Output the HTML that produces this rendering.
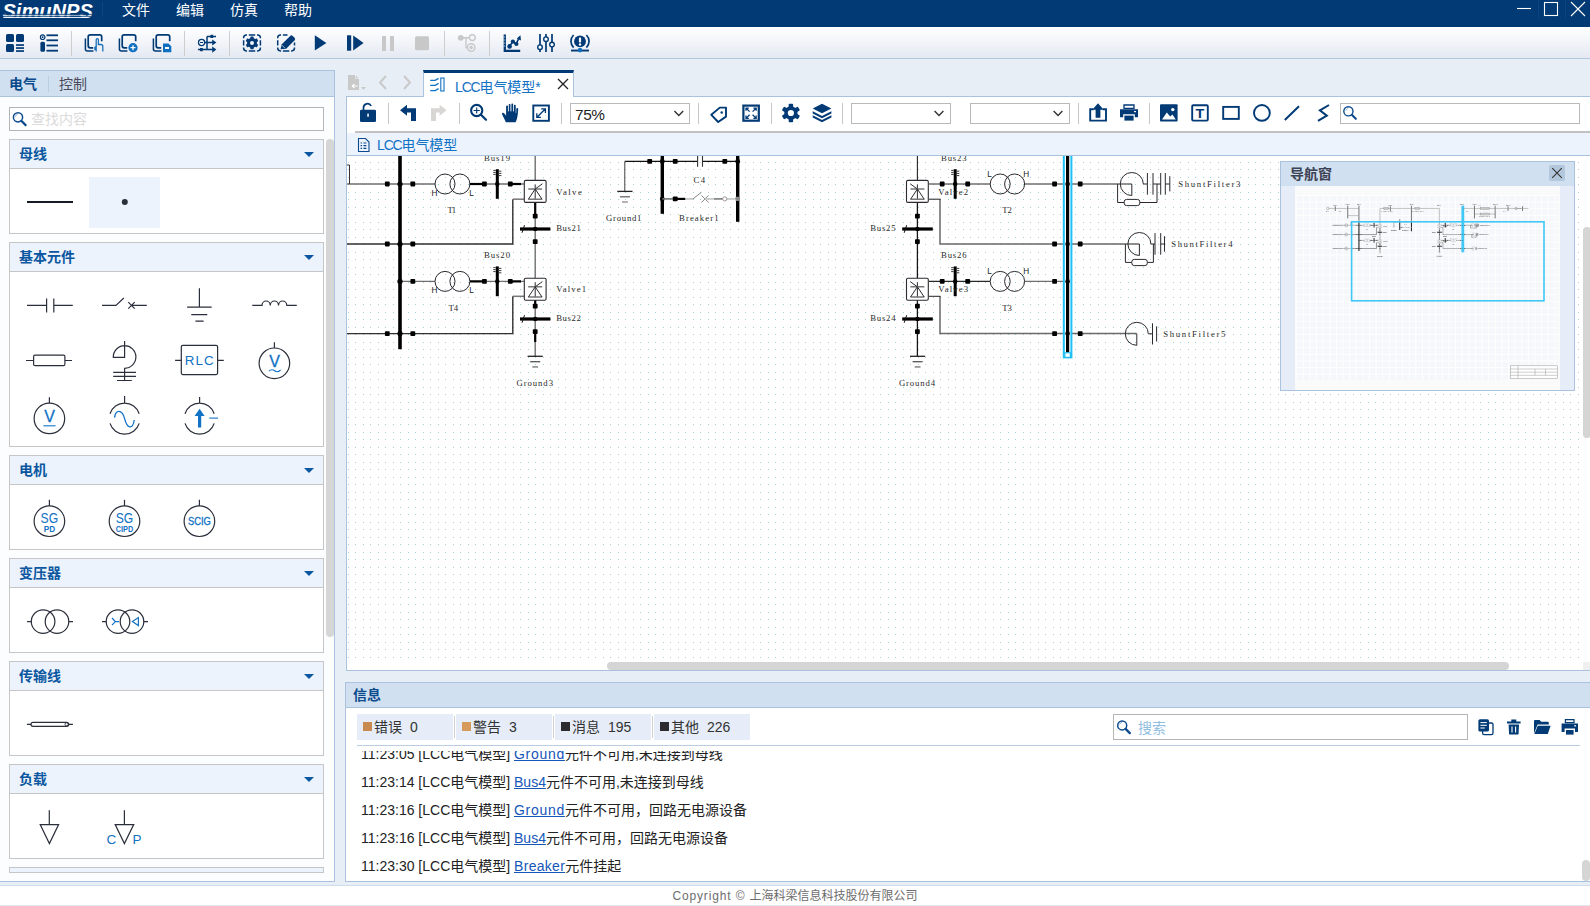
<!DOCTYPE html>
<html lang="zh-CN">
<head>
<meta charset="utf-8">
<title>SimuNPS</title>
<style>
*{box-sizing:border-box;margin:0;padding:0}
html,body{width:1590px;height:906px;overflow:hidden;background:#e8eef6;font-family:"Liberation Sans","Noto Sans CJK SC",sans-serif;font-size:14px;color:#222}
.abs{position:absolute}
#titlebar{position:absolute;left:0;top:0;width:1590px;height:27px;background:#013a75}
#titlebar .menu{position:absolute;top:0;height:24px;line-height:21px;color:#fff;font-size:14px}
#toolbar{position:absolute;left:0;top:27px;width:1590px;height:32px;background:linear-gradient(#ffffff 0%,#f3f5f9 45%,#e4e9f2 100%);border-bottom:1px solid #b4c8df}
.tsep{position:absolute;top:31px;width:1px;height:25px;background:#cdcdcd}
.ico{position:absolute}
/* left panel */
#left{position:absolute;left:-1px;top:70px;width:336px;height:812px;background:#fcfdff;border:1px solid #a9c3df}
#lefthead{position:absolute;left:0;top:0;width:334px;height:26px;background:#d0e0f0;border-bottom:1px solid #a9c3df}
.sec{position:absolute;left:9px;width:315px;border:1px solid #c6c6c6;background:#fff}
.sec .h{height:29px;background:#edf3fd;border-bottom:1px solid #c6c6c6;position:relative}
.sec .h span{position:absolute;left:9px;top:4px;font-size:14px;font-weight:bold;color:#0a57a0;line-height:20px}
.sec .h i{position:absolute;right:9.5px;top:11.6px;width:0;height:0;border-left:5.2px solid transparent;border-right:5.2px solid transparent;border-top:5.3px solid #0a57a0}
/* center */
#center{position:absolute;left:346px;top:96px;width:1250px;height:575px;background:#fff;border:1px solid #a9c3df}
#info{position:absolute;left:345px;top:682px;width:1251px;height:200px;background:#fff;border:1px solid #a9c3df}
#infohead{position:absolute;left:0;top:0;width:1248px;height:25px;background:#d0e0f0;border-bottom:1px solid #a9c3df}
#footer{position:absolute;left:0;top:885px;width:1590px;height:21px;background:#fff;border-top:1px solid #cfdcec;border-bottom:1px solid #e3e8ef}
.csep{position:absolute;top:103px;width:1px;height:21px;background:#c6c6c6}
.combo{position:absolute;top:103px;height:21px;border:1px solid #b9b9b9;background:#fff}
.ftab{position:absolute;top:714px;width:96px;height:26px;background:#e6edf8;font-size:14px;line-height:27px;color:#333}
.logl{position:absolute;left:361px;font-size:14px;line-height:20px;color:#222;white-space:nowrap}
.logl u{color:#1556b8}
</style>
</head>
<body>
<div id="titlebar">
<svg class="abs" style="left:0;top:0" width="100" height="27" viewBox="0 0 100 27">
 <text x="2.4" y="18" font-family="Liberation Sans,sans-serif" font-style="italic" font-weight="bold" font-size="20.8" fill="#fff" textLength="90.5" lengthAdjust="spacingAndGlyphs">SimuNPS</text>
 <g stroke="#fff" stroke-width="1.1" opacity="0.9"><line x1="3.4" y1="15.3" x2="86" y2="15.3"/><line x1="3.2" y1="17.4" x2="85" y2="17.4"/></g>
 <g stroke="#013a75" stroke-width="1">
  <line x1="0" y1="14.3" x2="95" y2="14.3" stroke-width="0.9"/><line x1="0" y1="16.3" x2="95" y2="16.3" stroke-width="0.9"/>
 </g>
</svg>
<div class="abs" style="left:102px;top:2px;width:1px;height:15px;background:#0d4583"></div>
<span class="menu" style="left:122px">文件</span>
<span class="menu" style="left:176px">编辑</span>
<span class="menu" style="left:230px">仿真</span>
<span class="menu" style="left:284px">帮助</span>
<svg class="abs" style="left:1505px;top:0" width="85" height="27" viewBox="0 0 85 27" fill="none" stroke="#fff" stroke-width="1.1">
 <line x1="12" y1="8.5" x2="26" y2="8.5"/>
 <rect x="39.5" y="2.5" width="13" height="13"/>
 <path d="M66 2 L80 16 M80 2 L66 16"/>
 <line x1="33.5" y1="0" x2="33.5" y2="18" stroke="#0d4583"/><line x1="60.5" y1="0" x2="60.5" y2="18" stroke="#0d4583"/>
</svg>
</div>

<div id="toolbar"></div>
<div class="tsep" style="left:71px"></div><div class="tsep" style="left:184px"></div><div class="tsep" style="left:229px"></div><div class="tsep" style="left:444px"></div><div class="tsep" style="left:489px"></div>
<svg class="abs" style="left:0;top:27px" width="640" height="32" viewBox="0 0 640 32">

<g fill="#013a75">
 <!-- 1 grid -->
 <g transform="translate(15,16)"><rect x="-9" y="-9" width="8" height="8" rx="1.5"/><rect x="1" y="-9" width="8" height="8" rx="1.5"/><rect x="-9" y="1" width="8" height="8" rx="1.5"/><rect x="1" y="1.2" width="8" height="1.7"/><rect x="1" y="4.2" width="8" height="1.7"/><rect x="1" y="7.2" width="8" height="1.7"/></g>
 <!-- 2 list -->
 <g transform="translate(49,16)"><circle cx="-6.3" cy="-5.8" r="2.3" fill="none" stroke="#013a75" stroke-width="1.2"/><circle cx="-6.3" cy="-5.8" r="0.9"/><rect x="-8.6" y="-1.3" width="4.6" height="10" rx="1.5"/><rect x="-2.5" y="-8.6" width="11.5" height="1.8"/><rect x="-2.5" y="-3.6" width="11.5" height="1.8"/><rect x="-2.5" y="1.6" width="11.5" height="1.8"/><rect x="-2.5" y="6.8" width="11.5" height="1.8"/></g>
 <!-- 3 pages hand -->
 <g transform="translate(94,16)"><path d="M-6 -8.2 h9.5 a2 2 0 0 1 2 2 v4.5 M-6 -8.2 a2 2 0 0 0 -2 2 v9 a2 2 0 0 0 2 2 h3" fill="none" stroke="#013a75" stroke-width="1.7" transform="translate(2.2,0)"/><path d="M-8.6 -4.5 v10.5 a2 2 0 0 0 2 2 h6" fill="none" stroke="#013a75" stroke-width="1.5"/><path d="M2.2 8.5 v-5 l-1.3 0.8 v3 M2.2 3 v-6.3 a1.1 1.1 0 0 1 2.2 0 v4.8 h2.4 a2 2 0 0 1 2 2 v5" fill="none" stroke="#1d6fb6" stroke-width="1.3"/></g>
 <!-- 4 pages plus -->
 <g transform="translate(128,16)"><path d="M-6 -8.2 h9.5 a2 2 0 0 1 2 2 v4.5 M-6 -8.2 a2 2 0 0 0 -2 2 v9 a2 2 0 0 0 2 2 h3" fill="none" stroke="#013a75" stroke-width="1.7" transform="translate(2.2,0)"/><path d="M-8.6 -4.5 v10.5 a2 2 0 0 0 2 2 h6" fill="none" stroke="#013a75" stroke-width="1.5"/><circle cx="5" cy="4.7" r="4.6" fill="#0e6fc0"/><path d="M5 2.2 v5 M2.5 4.7 h5" stroke="#fff" stroke-width="1.3"/></g>
 <!-- 5 pages save -->
 <g transform="translate(162,16)"><path d="M-6 -8.2 h9.5 a2 2 0 0 1 2 2 v4.5 M-6 -8.2 a2 2 0 0 0 -2 2 v9 a2 2 0 0 0 2 2 h3" fill="none" stroke="#013a75" stroke-width="1.7" transform="translate(2.2,0)"/><path d="M-8.6 -4.5 v10.5 a2 2 0 0 0 2 2 h6" fill="none" stroke="#013a75" stroke-width="1.5"/><path d="M1 0.5 h5.5 l2.8 2.8 v5.9 h-8.3 z" fill="#0e6fc0"/><rect x="3" y="4" width="4" height="2" fill="#fff"/></g>
 <!-- 6 flow -->
 <g transform="translate(206,16)"><path d="M1 -6.6 V6.6 M1 -6.6 H10 M-1 -0.5 H7 M-8 6.6 H7" stroke="#013a75" stroke-width="1.5" fill="none"/><rect x="4.4" y="-8.2" width="2.8" height="3.2"/><rect x="-6" y="5" width="2.8" height="3.2"/><path d="M6.2 -3.6 l4.2 3.1 l-4.2 3.1 z M6.2 3.5 l4.2 3.1 l-4.2 3.1 z"/><circle cx="-4.4" cy="-0.5" r="3.1" fill="#fff" stroke="#013a75" stroke-width="1.3"/><path d="M-6 -0.5 h3.2" stroke="#013a75" stroke-width="1.1"/></g>
 <!-- 7 gear box -->
 <g transform="translate(252,15.9)"><path d="M-8.4 -4.6 v-0.6 a2.8 2.8 0 0 1 2.8 -2.8 h0.6 M5 -8 h0.6 a2.8 2.8 0 0 1 2.8 2.8 v0.6 M8.4 4.6 v0.6 a2.8 2.8 0 0 1 -2.8 2.8 h-0.6 M-5 8 h-0.6 a2.8 2.8 0 0 1 -2.8 -2.8 v-0.6 M-3.2 -8 h6.4 M-3.2 8 h6.4 M-8.4 -2.6 v5.2 M8.4 -2.6 v5.2" fill="none" stroke="#013a75" stroke-width="1.5"/><circle r="3.5" fill="none" stroke="#013a75" stroke-width="3"/><g><rect x="-1.6" y="-6.4" width="3.2" height="2.6" rx="0.6"/><rect x="-1.6" y="3.8" width="3.2" height="2.6" rx="0.6"/></g><g transform="rotate(60)"><rect x="-1.6" y="-6.4" width="3.2" height="2.6" rx="0.6"/><rect x="-1.6" y="3.8" width="3.2" height="2.6" rx="0.6"/></g><g transform="rotate(120)"><rect x="-1.6" y="-6.4" width="3.2" height="2.6" rx="0.6"/><rect x="-1.6" y="3.8" width="3.2" height="2.6" rx="0.6"/></g></g>
 <!-- 8 pencil box -->
 <g transform="translate(286.1,15.9)"><path d="M-8.4 -4.6 v-0.6 a2.8 2.8 0 0 1 2.8 -2.8 h0.6 M8.4 4.6 v0.6 a2.8 2.8 0 0 1 -2.8 2.8 h-0.6 M-5 8 h-0.6 a2.8 2.8 0 0 1 -2.8 -2.8 v-0.6 M-3.2 -8 h4.6 M-3.2 8 h6.4 M-8.4 -2.6 v5.2 M8.4 -0.4 v3" fill="none" stroke="#013a75" stroke-width="1.5"/><path d="M-5.6 6.4 l1.3 -5 l8.4 -8.4 a1.8 1.8 0 0 1 2.5 0 l1.9 1.9 a1.8 1.8 0 0 1 0 2.5 l-8.4 8.4 z"/><path d="M-4.6 1.9 l3.4 3.4" stroke="#e8eef6" stroke-width="0.7"/></g>
 <!-- 9 play -->
 <path d="M314.8 8.3 l11.6 7.6 l-11.6 7.6 z"/>
 <!-- 10 step -->
 <rect x="347" y="8.3" width="4.2" height="15.4"/><path d="M353.2 8.4 l10.4 7.6 l-10.4 7.6 z"/>
 <!-- 11 pause -->
 <g fill="#c8c8c8"><rect x="382" y="9" width="4" height="15"/><rect x="390" y="9" width="4" height="15"/><rect x="415" y="9.3" width="14" height="14" rx="1.5"/></g>
 <!-- 13 nodes -->
 <g transform="translate(467,16)" fill="none" stroke="#c8c8c8" stroke-width="1.4"><circle cx="-6.2" cy="-5.2" r="2.2" fill="#c8c8c8"/><circle cx="5.3" cy="-5.4" r="2.9"/><circle cx="4.2" cy="4.5" r="3.8"/><circle cx="4.2" cy="4.5" r="1.8" fill="#c8c8c8" stroke="none"/><path d="M-4 -5.3 h6.4 M-1 -5.3 v9.8 h1.4"/></g>
 <!-- 14 chart -->
 <g transform="translate(512,16)"><path d="M-7.2 -8.4 v16.2 h15.4" fill="none" stroke="#013a75" stroke-width="2.3"/><path d="M-2.6 3.2 l3.4 -4.4 l3.2 2 l3.2 -6" fill="none" stroke="#013a75" stroke-width="1.6"/><circle cx="-2.4" cy="3.4" r="2.3"/><circle cx="0.9" cy="-1.4" r="2.1"/><circle cx="4.4" cy="1" r="2.1"/><path d="M4.8 -4.6 l3.6 -3.2 l0.6 5.4 z"/><path d="M-8.4 -6 h1.6 M-8.4 -3 h1.6 M-8.4 0 h1.6 M-8.4 3 h1.6" stroke="#fff" stroke-width="0.7"/></g>
 <!-- 15 sliders -->
 <g transform="translate(546,16)"><path d="M-6 -9 v18 M0 -9 v18 M6 -9 v18" stroke="#013a75" stroke-width="1.7"/><circle cx="-6" cy="4.2" r="2.3" fill="#fff" stroke="#013a75" stroke-width="1.4"/><circle cx="0" cy="-3.8" r="2.3" fill="#fff" stroke="#013a75" stroke-width="1.4"/><circle cx="6" cy="1.6" r="2.3" fill="#fff" stroke="#013a75" stroke-width="1.4"/></g>
 <!-- 16 alert -->
 <g transform="translate(580,16)"><circle cx="0" cy="-1.6" r="5.9"/><rect x="-1.1" y="-5.6" width="2.2" height="5" rx="0.6" fill="#fff"/><circle cx="0" cy="1.5" r="1.2" fill="#fff"/><path d="M-6.4 -8 a8.8 8.8 0 0 0 0 12.6 M6.4 -8 a8.8 8.8 0 0 1 0 12.6" fill="none" stroke="#013a75" stroke-width="1.7"/><rect x="-9" y="6.6" width="18" height="1.9"/><rect x="-1.9" y="5" width="3.8" height="4.2" rx="1" fill="#0e6fc0"/></g>
</g>
</svg>

<div id="left">
 <div id="lefthead">
  <span class="abs" style="left:9px;top:3px;font-size:14px;font-weight:bold;color:#0b4a8c;line-height:20px">电气</span>
  <div class="abs" style="left:48px;top:5px;width:1px;height:16px;background:#b9cde3"></div>
  <span class="abs" style="left:59px;top:3px;font-size:14px;color:#4a4a5a;line-height:20px">控制</span>
 </div>
 <div class="abs" style="left:9px;top:36px;width:315px;height:24px;border:1px solid #b5b5b5;background:#fff">
  <svg class="abs" style="left:1px;top:2px" width="18" height="18" viewBox="0 0 18 18"><circle cx="7" cy="7.3" r="4.6" fill="none" stroke="#0b4a8c" stroke-width="1.5"/><path d="M10.3 10.8 l4.3 4.3" stroke="#0b4a8c" stroke-width="2.2" stroke-linecap="round"/><path d="M4.3 6.5 a3 3 0 0 1 2.2 -2.2" fill="none" stroke="#7aa3cf" stroke-width="0.9"/></svg>
  <span class="abs" style="left:21px;top:1px;font-size:14px;line-height:20px;color:#dbdbdb">查找内容</span>
 </div>
 <!-- scrollbar -->
 <div class="abs" style="left:326px;top:68px;width:8px;height:498px;background:#d6d6d6;border-radius:4px"></div>

 <div class="sec" style="top:68px;height:95px"><div class="h"><span>母线</span><i></i></div></div>
 <div class="sec" style="top:171px;height:205px"><div class="h"><span>基本元件</span><i></i></div></div>
 <div class="sec" style="top:384px;height:95px"><div class="h"><span>电机</span><i></i></div></div>
 <div class="sec" style="top:487px;height:95px"><div class="h"><span>变压器</span><i></i></div></div>
 <div class="sec" style="top:590px;height:95px"><div class="h"><span>传输线</span><i></i></div></div>
 <div class="sec" style="top:693px;height:95px"><div class="h"><span>负载</span><i></i></div></div>
 <div class="sec" style="top:796px;height:6px;background:#edf3fd"></div>
 <div class="abs" style="left:89px;top:106px;width:71px;height:51px;background:#edf3fc"></div>
</div>
<svg class="abs" style="left:0;top:130px" width="335" height="750" viewBox="0 130 335 750" fill="none" stroke="#2b2f3b" stroke-width="1.2" font-family="Liberation Sans,sans-serif">
 <!-- bus -->
 <path d="M27 202 H73" stroke-width="1.9" stroke="#161a26"/><circle cx="124.8" cy="202" r="3" fill="#2b2f3b" stroke="none"/>
 <!-- row1 y=305.4 -->
 <path d="M27 305.4 H46.6 M46.6 298.4 V312.6 M53.8 298.4 V312.6 M53.8 305.4 H72.8"/>
 <path d="M102 305.4 H116 L123.8 298 M128.3 302.2 L134.7 308.6 M134.7 302.2 L128.3 308.6 M131.5 305.4 H146.8"/>
 <path d="M199.4 288.2 V307.2 M187.1 307.2 H211.7 M191.3 314.7 H207.3 M195.4 321.2 H203.6"/>
 <path d="M252.3 305.4 H262 a4.13 4.4 0 0 1 8.26 0 a4.13 4.4 0 0 1 8.26 0 a4.13 4.4 0 0 1 8.26 0 H296.8"/>
 <!-- row2 y=360.5 -->
 <path d="M26 360.5 H33.6 M64.9 360.5 H72"/><rect x="33.6" y="355.2" width="31.3" height="10.5" rx="1.5"/>
 <path d="M124.6 341 V357.4 H113.3 A11.3 11.3 0 1 1 124.6 368.3 V380.5 M113.2 372.3 H136 M113.2 376.4 H136 M117 380.5 H131.8"/>
 <rect x="181.3" y="345.3" width="36.3" height="29.3" rx="1.5"/><path d="M175.1 360.3 H181.3 M217.6 360.3 H223.8"/>
 <text x="199.7" y="364.8" text-anchor="middle" font-size="13.4" fill="#1272c4" stroke="none" letter-spacing="1">RLC</text>
 <circle cx="274.4" cy="363.3" r="15.3"/><path d="M274.4 342.2 V348"/>
 <text x="274.5" y="367.2" text-anchor="middle" font-size="16" fill="#1272c4" stroke="#1272c4" stroke-width="0.3">V</text>
 <path d="M268.8 371.2 q3 -2.6 5.8 -0.4 t6 -0.8" stroke="#1272c4" stroke-width="1.1"/>
 <!-- row3 y=418.5 -->
 <circle cx="49.4" cy="418.4" r="15.3"/><path d="M49.4 397.2 V403.1"/>
 <text x="49.5" y="421.8" text-anchor="middle" font-size="16" fill="#1272c4" stroke="#1272c4" stroke-width="0.3">V</text>
 <path d="M43.4 425.8 H55.6" stroke="#1272c4" stroke-width="1.1"/>
 <path d="M124.6 396.1 V403.3 M110 413.8 A15.3 15.3 0 0 1 139.2 413.8 M110 423.4 A15.3 15.3 0 0 0 139.2 423.4"/>
 <path d="M114.6 417.6 C115.5 409.5 122 408.5 124.6 418.6 S132.5 430 134.3 420" stroke="#1272c4" stroke-width="1.3"/>
 <path d="M199.6 397.1 V403.3 M185 413.8 A15.3 15.3 0 0 1 214.2 413.8 M185 423.4 A15.3 15.3 0 0 0 214.2 423.4"/>
 <path d="M199.6 408.8 L204.6 416 H201.2 V427.6 H198 V416 H194.6 Z" fill="#1272c4" stroke="none"/><path d="M209.3 418.1 H218" stroke="#1272c4" stroke-width="1.1"/>
 <!-- machines y=521.2 -->
 <g>
 <circle cx="49.4" cy="521.2" r="15.3"/><path d="M49.4 499.8 V506"/>
 <circle cx="124.5" cy="521.2" r="15.3"/><path d="M124.5 499.8 V506"/>
 <circle cx="199.4" cy="521.2" r="15.3"/><path d="M199.4 499.8 V506"/>
 <g fill="#1272c4" stroke="none" text-anchor="middle">
  <text x="49.4" y="522.5" font-size="14.6" textLength="17.6" lengthAdjust="spacingAndGlyphs">SG</text><text x="49.4" y="531.7" font-size="8.4" font-weight="bold" textLength="11.4" lengthAdjust="spacingAndGlyphs">PD</text>
  <text x="124.5" y="522.5" font-size="14.6" textLength="17.6" lengthAdjust="spacingAndGlyphs">SG</text><text x="124.5" y="531.5" font-size="8.4" font-weight="bold" textLength="17.4" lengthAdjust="spacingAndGlyphs">CIPD</text>
  <text x="199.4" y="525.2" font-size="10.8" textLength="23" lengthAdjust="spacingAndGlyphs" stroke="#1272c4" stroke-width="0.3">SCIG</text>
 </g></g>
 <!-- transformers y=621.6 -->
 <circle cx="43.1" cy="621.6" r="11.8"/><circle cx="57" cy="621.6" r="11.8"/><path d="M27.1 621.6 H31.3 M68.8 621.6 H73"/>
 <circle cx="118" cy="621.6" r="11.8"/><circle cx="132" cy="621.6" r="11.8"/><path d="M102 621.6 H106.2 M143.8 621.6 H148"/>
 <path d="M112 618 L115.3 621.6 L112 625.2 M115.3 621.6 H119" stroke="#1272c4"/><path d="M138.4 617.6 V625.6 L132.4 621.6 Z" stroke="#1272c4"/>
 <!-- line -->
 <path d="M26.9 724.3 H31 M68.7 724.3 H72.9"/><rect x="31" y="722.3" width="37.7" height="4" rx="2"/><circle cx="66.6" cy="724.3" r="1.6" stroke-width="0.9"/>
 <!-- loads -->
 <path d="M49.3 810.2 V824.6 M40.2 824.6 H58.6 L49.4 843.6 Z"/>
 <path d="M124.4 810.2 V824.6 M115.2 824.6 H133.7 L124.4 843.6 Z"/>
 <text x="106.5" y="843.8" font-size="13.5" fill="#1272c4" stroke="none">C</text><text x="132.6" y="843.8" font-size="13.5" fill="#1272c4" stroke="none">P</text>
</svg>


<!-- tab strip -->
<svg class="abs" style="left:346px;top:70px" width="80" height="27" viewBox="346 70 80 27">
 <g fill="#c9c9c9"><path d="M348 75 h7.5 l3.5 3.5 v11.5 h-11 z"/><path d="M361 87 h5 l-2.5 3 z"/></g>
 <path d="M355.5 75 v3.5 h3.5" fill="none" stroke="#e8eef6" stroke-width="0.8"/>
 <path d="M352.2 86 h5.4 M354.4 83.8 l-2.2 2.2 l2.2 2.2" fill="none" stroke="#fff" stroke-width="1.1"/>
 <path d="M386 76 l-6 6.5 l6 6.5 M404 76 l6 6.5 l-6 6.5" fill="none" stroke="#c9c9c9" stroke-width="2"/>
</svg>
<div class="abs" style="left:423px;top:70px;width:151px;height:27px;background:#fff;border-left:1px solid #a9c3df;border-right:1px solid #a9c3df;border-top:3px solid #013a75;z-index:3"></div>
<svg class="abs" style="left:429px;top:77px;z-index:4" width="18" height="18" viewBox="0 0 18 18" fill="none" stroke="#1272c4" stroke-width="1.3"><path d="M1.2 3.4 h5 l3.4 -2 M1.2 8.4 h5 l3.4 -2 M1.2 13.6 h5 l3.4 -2"/><rect x="11.8" y="1" width="3.2" height="13" stroke-width="1.1"/></svg>
<span class="abs" style="left:455px;top:77px;font-size:14px;line-height:20px;color:#1272c4;z-index:4;letter-spacing:-0.1px;white-space:nowrap"><span style="letter-spacing:-1.15px">LCC</span>电气模型*</span>
<svg class="abs" style="left:556px;top:77px;z-index:4" width="14" height="14" viewBox="0 0 14 14"><path d="M2 2 L12 12 M12 2 L2 12" stroke="#222" stroke-width="1.3"/></svg>

<div id="center">
 <!-- canvas toolbar bg -->
 <div class="abs" style="left:0;top:0;width:1248px;height:34px;background:#fff"></div>
 <div class="abs" style="left:8px;top:34px;width:1240px;height:2px;background:#c1c1c1"></div>
 <div class="abs" style="left:0;top:36px;width:1248px;height:23px;background:#edf3fd;border-bottom:1px solid #a9c3df"></div>
 <svg class="abs" style="left:9px;top:40px" width="16" height="16" viewBox="0 0 16 16" fill="none" stroke="#0b4a8c" stroke-width="1.1"><path d="M2.5 1.5 h7 l3.5 3.5 v9.5 h-10.5 z"/><path d="M4.6 6 h1.4 M4.6 8.7 h1.4 M4.6 11.4 h1.4 M7.4 6 h3 M7.4 8.7 h3 M7.4 11.4 h3" stroke-width="1.2"/></svg>
 <span class="abs" style="left:30px;top:38px;font-size:14px;line-height:20px;color:#1272c4;letter-spacing:-0.1px;white-space:nowrap"><span style="letter-spacing:-1.15px">LCC</span>电气模型</span>
</div>
<div class="csep" style="left:388px"></div><div class="csep" style="left:459px"></div><div class="csep" style="left:561px"></div><div class="csep" style="left:698px"></div><div class="csep" style="left:771px"></div><div class="csep" style="left:842px"></div><div class="csep" style="left:1078px"></div><div class="csep" style="left:1149px"></div>
<div class="combo" style="left:570px;width:120px"><span class="abs" style="left:4px;top:1px;font-size:15.4px;letter-spacing:-0.4px;line-height:20px;color:#222">75%</span></div>
<div class="combo" style="left:851px;width:100px"></div>
<div class="combo" style="left:970px;width:100px"></div>
<div class="combo" style="left:1340px;width:240px"></div>
<svg class="abs" style="left:347px;top:97px" width="1243" height="34" viewBox="347 97 1243 34" fill="#013a75" stroke="none">
 <!-- lock -->
 <rect x="360" y="109.8" width="16" height="12.2" rx="1.3"/><path d="M363.5 110 v-2.4 a4 4 0 0 1 7.6 -1.6" fill="none" stroke="#013a75" stroke-width="1.7"/><rect x="367.3" y="113.6" width="1.5" height="3.2" fill="#fff"/>
 <!-- undo -->
 <path d="M400 110.3 L407 104.8 V108.2 H416 V121 H411 V112.6 H407 V115.8 Z"/>
 <path d="M446.6 110.3 L439.6 104.8 V108.2 H431 V121 H436 V112.6 H439.6 V115.8 Z" fill="#d8d5d5"/>
 <!-- zoom -->
 <circle cx="476.7" cy="110.5" r="5.6" fill="none" stroke="#013a75" stroke-width="2.1"/><path d="M481 114.8 L486 119.8" stroke="#013a75" stroke-width="2.2" stroke-linecap="round"/><path d="M473.6 110.5 h6.2 M476.7 107.4 v6.2" stroke="#013a75" stroke-width="1.1"/>
 <!-- hand -->
 <path d="M505.8 122.3 C505 119.6 502.8 116.2 502.1 114.2 C501.7 112.9 503.1 112.2 504.1 113.3 L506.1 115.8 V106.6 a1 1 0 0 1 2 0 V111 h0.55 V104.9 a1 1 0 0 1 2 0 V111 h0.55 V104.4 a1 1 0 0 1 2 0 V111 h0.55 V105.8 a1 1 0 0 1 2 0 V113 h0.5 L516.3 108.8 a0.95 0.95 0 0 1 1.9 0.1 C518 114.2 517.4 118.8 515.6 122.3 Z"/>
 <path d="M508.4 104.5 V111.6 M510.95 104 V111.6 M513.5 105 V111.6" stroke="#fff" stroke-width="0.55" fill="none"/>
 <!-- expand -->
 <rect x="533.3" y="105.5" width="15.6" height="15.3" fill="none" stroke="#013a75" stroke-width="1.9"/><path d="M537 117.2 L545.2 109 M541.2 108.8 h4.2 v4.2 M536.8 113.2 v4.2 h4.2" fill="none" stroke="#013a75" stroke-width="1.3"/>
 <!-- combo arrows -->
 <g fill="none" stroke="#333" stroke-width="1.4"><path d="M674.4 111 l4.4 4.6 l4.4 -4.6"/><path d="M934.6 111 l4.4 4.6 l4.4 -4.6"/><path d="M1053.6 111 l4.4 4.6 l4.4 -4.6"/></g>
 <!-- tag -->
 <path d="M711.3 114.8 L719.8 107.6 H726 V116.6 L718.2 122 Z" fill="none" stroke="#013a75" stroke-width="1.9" stroke-linejoin="round"/><circle cx="721.7" cy="112.5" r="1.2"/>
 <!-- fit -->
 <rect x="743.4" y="105.6" width="15.4" height="15.1" fill="none" stroke="#013a75" stroke-width="2.2"/>
 <g fill="none" stroke="#013a75" stroke-width="1.25"><path d="M749.6 111.6 L746.2 108.2 M746 110.8 v-2.8 h2.8 M752.6 111.6 L756 108.2 M753.4 108 h2.8 v2.8 M749.6 114.7 L746.2 118.1 M746 115.5 v2.8 h2.8 M752.6 114.7 L756 118.1 M753.4 118.3 h2.8 v-2.8"/></g>
 <!-- gear -->
 <g transform="translate(790.9,113)"><circle r="4.9" fill="none" stroke="#013a75" stroke-width="3.6"/><g><rect x="-2.2" y="-9.2" width="4.4" height="4" rx="0.8"/><rect x="-2.2" y="5.2" width="4.4" height="4" rx="0.8"/></g><g transform="rotate(60)"><rect x="-2.2" y="-9.2" width="4.4" height="4" rx="0.8"/><rect x="-2.2" y="5.2" width="4.4" height="4" rx="0.8"/></g><g transform="rotate(120)"><rect x="-2.2" y="-9.2" width="4.4" height="4" rx="0.8"/><rect x="-2.2" y="5.2" width="4.4" height="4" rx="0.8"/></g></g>
 <!-- layers -->
 <path d="M822 103.8 L831.4 108.5 L822 113.3 L812.7 108.5 Z"/><path d="M812.7 111.3 L822 116 L831.4 111.3 V113.6 L822 118.3 L812.7 113.6 Z M812.7 115.2 L822 119.9 L831.4 115.2 V117.5 L822 122.3 L812.7 117.5 Z"/>
 <!-- export -->
 <path d="M1093.5 109.2 H1090.2 V120.6 H1106 V109.2 H1102.7" fill="none" stroke="#013a75" stroke-width="1.9"/><path d="M1098 103.3 L1103.7 109.8 H1100.4 V117.8 H1095.6 V109.8 H1092.3 Z"/>
 <!-- print -->
 <path d="M1124 105 h10 v3.4 h-10 z" fill="none" stroke="#013a75" stroke-width="1.3"/><path d="M1120 109.3 h18 v8 h-3.2 v-3 h-11.6 v3 h-3.2 z"/><rect x="1124.4" y="115.6" width="9.2" height="5"/><rect x="1134" y="111" width="2" height="1.2" fill="#fff"/>
 <!-- image -->
 <rect x="1160" y="104.3" width="17.6" height="17.2" rx="1"/><path d="M1162 119.5 L1166.8 112.6 L1170.2 116.6 L1172.4 114.6 L1175.8 119.5 Z" fill="#fff"/><circle cx="1172.8" cy="109.6" r="1.7" fill="#fff"/>
 <!-- T -->
 <rect x="1192.2" y="105.2" width="15.6" height="15.4" rx="1" fill="none" stroke="#013a75" stroke-width="1.9"/><text x="1200" y="117.7" text-anchor="middle" font-family="Liberation Sans,sans-serif" font-weight="bold" font-size="12.2" textLength="8.8" lengthAdjust="spacingAndGlyphs" fill="#013a75">T</text>
 <!-- rect -->
 <rect x="1223.2" y="106.9" width="15.6" height="12" fill="none" stroke="#013a75" stroke-width="1.9"/>
 <circle cx="1261.9" cy="112.9" r="7.9" fill="none" stroke="#013a75" stroke-width="1.9"/>
 <path d="M1284.8 120 L1299 106.2" stroke="#013a75" stroke-width="2" fill="none"/>
 <path d="M1329 105 L1319.9 110.4 L1326.8 115.6 L1318 120.8" stroke="#013a75" stroke-width="2" fill="none"/>
 <!-- search icon -->
 <circle cx="1348.4" cy="111.3" r="4.6" fill="none" stroke="#0b4a8c" stroke-width="1.4"/><path d="M1351.8 114.8 l4 4" stroke="#0b4a8c" stroke-width="2.1" stroke-linecap="round"/><path d="M1345.8 110.6 a3 3 0 0 1 2 -2" fill="none" stroke="#7aa3cf" stroke-width="0.9"/>
</svg>

<svg class="abs" style="left:347px;top:156px" width="1243" height="514" viewBox="347 156 1243 514">
<defs><pattern id="dots" x="0" y="0" width="15" height="15" patternUnits="userSpaceOnUse"><g fill="#a7d2d2"><rect x="10" y="12" width="1" height="1"/><rect x="3" y="12" width="1" height="1"/><rect x="10" y="4" width="1" height="1"/><rect x="3" y="4" width="1" height="1"/></g></pattern></defs>
<rect x="347" y="156" width="1243" height="514" fill="#fff"/>
<rect x="347" y="156" width="1243" height="514" fill="url(#dots)"/>
<path d="M347 184 H435" stroke="#6f6f6f" stroke-width="1.4" fill="none"/>
<path d="M469.8 184 H524.4" stroke="#6f6f6f" stroke-width="1.4" fill="none"/>
<path d="M347 244 H512.8 V199.2" stroke="#303030" stroke-width="1.4" fill="none"/>
<path d="M512.8 199.2 H524.4" stroke="#777" stroke-width="1.5" fill="none"/>
<path d="M400 281.4 H435" stroke="#6f6f6f" stroke-width="1.4" fill="none"/>
<path d="M469.8 281.4 H524.4" stroke="#6f6f6f" stroke-width="1.4" fill="none"/>
<path d="M347 333.6 H512.8 V296.3" stroke="#303030" stroke-width="1.4" fill="none"/>
<path d="M512.8 296.3 H524.4" stroke="#777" stroke-width="1.5" fill="none"/>
<path d="M535.2 156 V180.4" stroke="#6f6f6f" stroke-width="1.4" fill="none"/>
<path d="M535.2 202.4 V278.4" stroke="#6f6f6f" stroke-width="1.4" fill="none"/>
<path d="M535.2 300 V356.3" stroke="#6f6f6f" stroke-width="1.4" fill="none"/>
<path d="M347 165 H349.5 V184" stroke="#333" stroke-width="1" fill="none"/>
<path d="M400 156 L400 349.2" stroke="#000" stroke-width="3.6" fill="none"/>
<circle cx="445" cy="184" r="10" fill="none" stroke="#2a2a30" stroke-width="1"/><circle cx="459.9" cy="184" r="10" fill="none" stroke="#2a2a30" stroke-width="1"/>
<text x="434.4" y="196" text-anchor="middle" font-family="Liberation Sans,sans-serif" font-size="8.2" fill="#222">H</text>
<text x="471.5" y="196" text-anchor="middle" font-family="Liberation Sans,sans-serif" font-size="8.2" fill="#222">L</text>
<circle cx="445" cy="281.4" r="10" fill="none" stroke="#2a2a30" stroke-width="1"/><circle cx="459.9" cy="281.4" r="10" fill="none" stroke="#2a2a30" stroke-width="1"/>
<text x="434.4" y="293.4" text-anchor="middle" font-family="Liberation Sans,sans-serif" font-size="8.2" fill="#222">H</text>
<text x="471.5" y="293.4" text-anchor="middle" font-family="Liberation Sans,sans-serif" font-size="8.2" fill="#222">L</text>
<path d="M470 184 L484.4 184" stroke="#000" stroke-width="2.2" fill="none"/>
<path d="M510.3 184 L521 184" stroke="#000" stroke-width="2.2" fill="none"/>
<rect x="482.0" y="181.6" width="4.8" height="4.8" rx="0.8" fill="#000"/>
<rect x="507.9" y="181.6" width="4.8" height="4.8" rx="0.8" fill="#000"/>
<rect x="410.4" y="181.6" width="4.8" height="4.8" rx="0.8" fill="#000"/>
<path d="M470 281.4 L484.4 281.4" stroke="#000" stroke-width="2.2" fill="none"/>
<path d="M510.3 281.4 L521 281.4" stroke="#000" stroke-width="2.2" fill="none"/>
<rect x="482.0" y="279.0" width="4.8" height="4.8" rx="0.8" fill="#000"/>
<rect x="507.9" y="279.0" width="4.8" height="4.8" rx="0.8" fill="#000"/>
<rect x="410.4" y="279.0" width="4.8" height="4.8" rx="0.8" fill="#000"/>
<rect x="384.9" y="181.6" width="4.8" height="4.8" rx="0.8" fill="#000"/>
<rect x="384.9" y="241.6" width="4.8" height="4.8" rx="0.8" fill="#000"/>
<rect x="410.4" y="241.6" width="4.8" height="4.8" rx="0.8" fill="#000"/>
<rect x="384.9" y="331.2" width="4.8" height="4.8" rx="0.8" fill="#000"/>
<rect x="410.4" y="331.2" width="4.8" height="4.8" rx="0.8" fill="#000"/>
<circle cx="400" cy="184" r="2.6" fill="#000"/>
<circle cx="400" cy="244" r="2.6" fill="#000"/>
<circle cx="400" cy="281.4" r="2.6" fill="#000"/>
<circle cx="400" cy="333.6" r="2.6" fill="#000"/>
<path d="M497.3 169.2 L497.3 198.8" stroke="#000" stroke-width="3" fill="none"/>
<path d="M498.8 171.2 h2.6 M498.8 173.39999999999998 h2.6 M498.8 175.6 h2.6 M493.3 170.39999999999998 h2.4 M493.3 172.39999999999998 h2.4 M493.3 174.39999999999998 h2.4" stroke="#222" stroke-width="0.9" fill="none"/>
<path d="M497.3 266.4 L497.3 296.2" stroke="#000" stroke-width="3" fill="none"/>
<path d="M498.8 268.4 h2.6 M498.8 270.59999999999997 h2.6 M498.8 272.79999999999995 h2.6 M493.3 267.59999999999997 h2.4 M493.3 269.59999999999997 h2.4 M493.3 271.59999999999997 h2.4" stroke="#222" stroke-width="0.9" fill="none"/>
<circle cx="497.3" cy="184" r="2.2" fill="#000"/><circle cx="497.3" cy="281.4" r="2.2" fill="#000"/>
<rect x="524.3" y="180.4" width="21.8" height="22" rx="1.4" fill="#fff" stroke="#2a2a30" stroke-width="1.1"/>
<path d="M535.1999999999999 184.4 V199.6" stroke="#2a2a30" stroke-width="1" fill="none"/>
<path d="M528.1999999999999 189.0 H542.1999999999999 M528.1999999999999 199.20000000000002 H542.1999999999999" stroke="#777" stroke-width="1.5" fill="none"/>
<path d="M535.1999999999999 189.0 L541.9999999999999 199.20000000000002 M535.1999999999999 189.0 L528.4 199.20000000000002 M535.1999999999999 189.0 L542.4 183.8" stroke="#2a2a30" stroke-width="1" fill="none"/>
<rect x="524.3" y="278.2" width="21.8" height="22" rx="1.4" fill="#fff" stroke="#2a2a30" stroke-width="1.1"/>
<path d="M535.1999999999999 282.2 V297.4" stroke="#2a2a30" stroke-width="1" fill="none"/>
<path d="M528.1999999999999 286.8 H542.1999999999999 M528.1999999999999 297.0 H542.1999999999999" stroke="#777" stroke-width="1.5" fill="none"/>
<path d="M535.1999999999999 286.8 L541.9999999999999 297.0 M535.1999999999999 286.8 L528.4 297.0 M535.1999999999999 286.8 L542.4 281.59999999999997" stroke="#2a2a30" stroke-width="1" fill="none"/>
<path d="M535.2 203 L535.2 216" stroke="#000" stroke-width="2.2" fill="none"/>
<rect x="532.8" y="213.8" width="4.8" height="4.8" rx="0.8" fill="#000"/>
<rect x="532.8" y="239.2" width="4.8" height="4.8" rx="0.8" fill="#000"/>
<path d="M535.2 300.5 L535.2 306" stroke="#000" stroke-width="2.2" fill="none"/>
<rect x="532.8" y="303.8" width="4.8" height="4.8" rx="0.8" fill="#000"/>
<path d="M535.2 331.6 L535.2 342" stroke="#000" stroke-width="2.2" fill="none"/>
<rect x="532.8" y="329.2" width="4.8" height="4.8" rx="0.8" fill="#000"/>
<path d="M520 229 L550.4 229" stroke="#000" stroke-width="3.2" fill="none"/>
<path d="M524.5 225.2 L522 232.8" stroke="#111" stroke-width="1" fill="none"/>
<path d="M520 319 L550.4 319" stroke="#000" stroke-width="3.2" fill="none"/>
<path d="M524.5 315.2 L522 322.8" stroke="#111" stroke-width="1" fill="none"/>
<circle cx="535.2" cy="229" r="2.2" fill="#000"/><circle cx="535.2" cy="319" r="2.2" fill="#000"/>
<path d="M527.6 356.3 H542.8000000000001" stroke="#222" stroke-width="1.3"/><path d="M530.2 361.7 H540.2" stroke="#555" stroke-width="1.3"/><path d="M532.3000000000001 366.90000000000003 H538.1" stroke="#999" stroke-width="1.8"/>
<text transform="translate(484,161.2) scale(1.18,1)" x="0" y="0" textLength="22.03" lengthAdjust="spacing" font-family="Liberation Serif,serif" font-size="7.4" fill="#2b2b2b">Bus19</text>
<text transform="translate(484,258.2) scale(1.18,1)" x="0" y="0" textLength="22.03" lengthAdjust="spacing" font-family="Liberation Serif,serif" font-size="7.4" fill="#2b2b2b">Bus20</text>
<text transform="translate(556.2,195.2) scale(1.18,1)" x="0" y="0" textLength="21.69" lengthAdjust="spacing" font-family="Liberation Serif,serif" font-size="7.4" fill="#2b2b2b">Valve</text>
<text transform="translate(556.2,231.4) scale(1.18,1)" x="0" y="0" textLength="20.85" lengthAdjust="spacing" font-family="Liberation Serif,serif" font-size="7.4" fill="#2b2b2b">Bus21</text>
<text transform="translate(556.2,291.8) scale(1.18,1)" x="0" y="0" textLength="25.42" lengthAdjust="spacing" font-family="Liberation Serif,serif" font-size="7.4" fill="#2b2b2b">Valve1</text>
<text transform="translate(556.2,321.4) scale(1.18,1)" x="0" y="0" textLength="20.85" lengthAdjust="spacing" font-family="Liberation Serif,serif" font-size="7.4" fill="#2b2b2b">Bus22</text>
<text transform="translate(447.5,213) scale(1.18,1)" x="0" y="0" textLength="7.29" lengthAdjust="spacing" font-family="Liberation Serif,serif" font-size="7.4" fill="#2b2b2b">T1</text>
<text transform="translate(448.5,311) scale(1.18,1)" x="0" y="0" textLength="8.14" lengthAdjust="spacing" font-family="Liberation Serif,serif" font-size="7.4" fill="#2b2b2b">T4</text>
<text transform="translate(516.5,386.4) scale(1.18,1)" x="0" y="0" textLength="30.93" lengthAdjust="spacing" font-family="Liberation Serif,serif" font-size="7.4" fill="#2b2b2b">Ground3</text>
<path d="M624.7 161.4 H697.6 M702.5 161.4 H737.7" stroke="#111" stroke-width="1.15" fill="none"/>
<path d="M624.7 161.4 V191.4" stroke="#777" stroke-width="1.4" fill="none"/>
<path d="M617.3 191.4 H632.5" stroke="#222" stroke-width="1.3"/><path d="M619.9 196.8 H629.9" stroke="#666" stroke-width="1.3"/><path d="M622.0 202.0 H627.8" stroke="#aaa" stroke-width="1.8"/>
<path d="M697.6 156 V166.8 M702.5 156 V166.8" stroke="#333" stroke-width="1.1" fill="none"/>
<path d="M662.3 156 L662.3 213.8" stroke="#000" stroke-width="3.4" fill="none"/>
<path d="M737.7 156 L737.7 221.8" stroke="#000" stroke-width="3.4" fill="none"/>
<rect x="647.3" y="159.0" width="4.8" height="4.8" rx="0.8" fill="#000"/>
<rect x="672.8" y="159.0" width="4.8" height="4.8" rx="0.8" fill="#000"/>
<rect x="722.4" y="159.0" width="4.8" height="4.8" rx="0.8" fill="#000"/>
<circle cx="662.3" cy="161.4" r="2.4" fill="#000"/><circle cx="737.7" cy="161.4" r="2.4" fill="#000"/><circle cx="662.3" cy="198.9" r="2.4" fill="#000"/>
<path d="M662.3 198.9 H675" stroke="#777" stroke-width="1.6" fill="none"/>
<path d="M675.2 198.9 L685.4 198.9" stroke="#000" stroke-width="2.2" fill="none"/>
<rect x="672.8" y="196.5" width="4.8" height="4.8" rx="0.8" fill="#000"/>
<path d="M685.4 198.9 H693" stroke="#c6c6c6" stroke-width="1.8" fill="none"/>
<path d="M693 198.9 L701.4 192.3" stroke="#888" stroke-width="1" fill="none"/>
<path d="M701.4 195.3 L708.6 202.5 M708.6 195.3 L701.4 202.5" stroke="#8a8a8a" stroke-width="1" fill="none"/>
<path d="M705 198.9 H714" stroke="#c9c9c9" stroke-width="1.8" fill="none"/>
<path d="M714 198.9 H723" stroke="#8a8a8a" stroke-width="1.8" fill="none"/>
<path d="M727 198.9 H736" stroke="#c9c9c9" stroke-width="1.8" fill="none"/>
<circle cx="724.8" cy="198.9" r="2.1" fill="#fff" stroke="#999" stroke-width="1"/>
<rect x="735.5" y="196.7" width="4.4" height="4.4" rx="0.8" fill="#8a8a8a"/>
<text transform="translate(606,221) scale(1.18,1)" x="0" y="0" textLength="30.08" lengthAdjust="spacing" font-family="Liberation Serif,serif" font-size="7.4" fill="#2b2b2b">Ground1</text>
<text transform="translate(679,221) scale(1.18,1)" x="0" y="0" textLength="33.56" lengthAdjust="spacing" font-family="Liberation Serif,serif" font-size="7.4" fill="#2b2b2b">Breaker1</text>
<text transform="translate(693.6,183.2) scale(1.18,1)" x="0" y="0" textLength="9.66" lengthAdjust="spacing" font-family="Liberation Serif,serif" font-size="7.4" fill="#2b2b2b">C4</text>
<path d="M917.4 156 V180.4" stroke="#222" stroke-width="1.1" fill="none"/>
<path d="M917.4 202.4 V278.4" stroke="#151515" stroke-width="1.3" fill="none"/>
<path d="M917.4 300 V356.3" stroke="#151515" stroke-width="1.3" fill="none"/>
<path d="M929 184 H990" stroke="#2a2a2a" stroke-width="1.2" fill="none"/>
<path d="M1024.6 184 H1131.8" stroke="#6f6f6f" stroke-width="1.4" fill="none"/>
<path d="M940 199.2 V244 H1139.4" stroke="#6a6a6a" stroke-width="1.5" fill="none"/>
<path d="M929 199.2 H940.6" stroke="#222" stroke-width="1" fill="none"/>
<path d="M929 281.4 H990" stroke="#2a2a2a" stroke-width="1.2" fill="none"/>
<path d="M1024.6 281.4 H1067.5" stroke="#6f6f6f" stroke-width="1.4" fill="none"/>
<path d="M940 296.3 V333.6 H1136.8" stroke="#6a6a6a" stroke-width="1.5" fill="none"/>
<path d="M929 296.3 H940.6" stroke="#222" stroke-width="1" fill="none"/>
<rect x="906.5" y="180.4" width="21.8" height="22" rx="1.4" fill="#fff" stroke="#2a2a30" stroke-width="1.1"/>
<path d="M917.4 184.4 V199.6" stroke="#2a2a30" stroke-width="1" fill="none"/>
<path d="M910.4 189.0 H924.4 M910.4 199.20000000000002 H924.4" stroke="#777" stroke-width="1.5" fill="none"/>
<path d="M917.4 189.0 L924.1999999999999 199.20000000000002 M917.4 189.0 L910.6 199.20000000000002 M917.4 189.0 L910.1999999999999 183.8" stroke="#2a2a30" stroke-width="1" fill="none"/>
<rect x="906.5" y="278.2" width="21.8" height="22" rx="1.4" fill="#fff" stroke="#2a2a30" stroke-width="1.1"/>
<path d="M917.4 282.2 V297.4" stroke="#2a2a30" stroke-width="1" fill="none"/>
<path d="M910.4 286.8 H924.4 M910.4 297.0 H924.4" stroke="#777" stroke-width="1.5" fill="none"/>
<path d="M917.4 286.8 L924.1999999999999 297.0 M917.4 286.8 L910.6 297.0 M917.4 286.8 L910.1999999999999 281.59999999999997" stroke="#2a2a30" stroke-width="1" fill="none"/>
<rect x="939.8" y="181.6" width="4.8" height="4.8" rx="0.8" fill="#000"/>
<rect x="965.3" y="181.6" width="4.8" height="4.8" rx="0.8" fill="#000"/>
<rect x="939.8" y="279.0" width="4.8" height="4.8" rx="0.8" fill="#000"/>
<rect x="965.3" y="279.0" width="4.8" height="4.8" rx="0.8" fill="#000"/>
<path d="M955.2 169.2 L955.2 198.8" stroke="#000" stroke-width="3" fill="none"/>
<path d="M956.7 171.2 h2.6 M956.7 173.39999999999998 h2.6 M956.7 175.6 h2.6 M951.2 170.39999999999998 h2.4 M951.2 172.39999999999998 h2.4 M951.2 174.39999999999998 h2.4" stroke="#222" stroke-width="0.9" fill="none"/>
<path d="M955.2 266.4 L955.2 296.2" stroke="#000" stroke-width="3" fill="none"/>
<path d="M956.7 268.4 h2.6 M956.7 270.59999999999997 h2.6 M956.7 272.79999999999995 h2.6 M951.2 267.59999999999997 h2.4 M951.2 269.59999999999997 h2.4 M951.2 271.59999999999997 h2.4" stroke="#222" stroke-width="0.9" fill="none"/>
<circle cx="955.2" cy="184" r="2.2" fill="#000"/><circle cx="955.2" cy="281.4" r="2.2" fill="#000"/>
<circle cx="1000.2" cy="184" r="10" fill="none" stroke="#2a2a30" stroke-width="1"/><circle cx="1014.6" cy="184" r="10" fill="none" stroke="#2a2a30" stroke-width="1"/>
<text x="989.6" y="177" text-anchor="middle" font-family="Liberation Sans,sans-serif" font-size="8.2" fill="#222">L</text>
<text x="1026.2" y="177" text-anchor="middle" font-family="Liberation Sans,sans-serif" font-size="8.2" fill="#222">H</text>
<circle cx="1000.2" cy="281.4" r="10" fill="none" stroke="#2a2a30" stroke-width="1"/><circle cx="1014.6" cy="281.4" r="10" fill="none" stroke="#2a2a30" stroke-width="1"/>
<text x="989.6" y="274.4" text-anchor="middle" font-family="Liberation Sans,sans-serif" font-size="8.2" fill="#222">L</text>
<text x="1026.2" y="274.4" text-anchor="middle" font-family="Liberation Sans,sans-serif" font-size="8.2" fill="#222">H</text>
<rect x="915.0" y="213.8" width="4.8" height="4.8" rx="0.8" fill="#000"/>
<rect x="915.0" y="239.2" width="4.8" height="4.8" rx="0.8" fill="#000"/>
<rect x="915.0" y="303.8" width="4.8" height="4.8" rx="0.8" fill="#000"/>
<rect x="915.0" y="329.2" width="4.8" height="4.8" rx="0.8" fill="#000"/>
<path d="M902.2 229 L932.8 229" stroke="#000" stroke-width="3.2" fill="none"/>
<path d="M906.7 225.2 L904.2 232.8" stroke="#111" stroke-width="1" fill="none"/>
<path d="M902.2 319 L932.8 319" stroke="#000" stroke-width="3.2" fill="none"/>
<path d="M906.7 315.2 L904.2 322.8" stroke="#111" stroke-width="1" fill="none"/>
<circle cx="917.4" cy="229" r="2.2" fill="#000"/><circle cx="917.4" cy="319" r="2.2" fill="#000"/>
<path d="M910.0 356.3 H925.2" stroke="#222" stroke-width="1.3"/><path d="M912.6 361.7 H922.6" stroke="#555" stroke-width="1.3"/><path d="M914.7 366.90000000000003 H920.5" stroke="#999" stroke-width="1.8"/>
<rect x="1063.8" y="154" width="7.6" height="203.4" fill="#fff" stroke="#1ec0f5" stroke-width="2"/>
<path d="M1067.6 156 L1067.6 352.6" stroke="#000" stroke-width="3.2" fill="none"/>
<rect x="1064.8" y="352.8" width="5.6" height="4.6" fill="#fff" stroke="#1ec0f5" stroke-width="1.2"/>
<rect x="1052.2" y="181.6" width="4.8" height="4.8" rx="0.8" fill="#000"/>
<rect x="1077.8" y="181.6" width="4.8" height="4.8" rx="0.8" fill="#000"/>
<circle cx="1067.6" cy="184" r="2.3" fill="#000"/>
<rect x="1052.2" y="241.6" width="4.8" height="4.8" rx="0.8" fill="#000"/>
<rect x="1077.8" y="241.6" width="4.8" height="4.8" rx="0.8" fill="#000"/>
<circle cx="1067.6" cy="244" r="2.3" fill="#000"/>
<rect x="1052.2" y="279.0" width="4.8" height="4.8" rx="0.8" fill="#000"/>
<circle cx="1067.6" cy="281.4" r="2.3" fill="#000"/>
<rect x="1052.2" y="331.2" width="4.8" height="4.8" rx="0.8" fill="#000"/>
<rect x="1077.8" y="331.2" width="4.8" height="4.8" rx="0.8" fill="#000"/>
<circle cx="1067.6" cy="333.6" r="2.3" fill="#000"/>
<path d="M1143.3 184 A11.5 11.5 0 1 0 1131.8 195.5 V184 " stroke="#2a2a30" stroke-width="1" fill="none"/>
<path d="M1150.9 244 A11.5 11.5 0 1 0 1139.4 255.5 V244 " stroke="#2a2a30" stroke-width="1" fill="none"/>
<path d="M1148.3 333.8 A11.5 11.5 0 1 0 1136.8 345.3 V333.8 " stroke="#2a2a30" stroke-width="1" fill="none"/>
<path d="M1143.3 184 H1147.4 M1153 184 H1160.7 M1165.3 184 H1169.8" stroke="#2a2a30" stroke-width="1" fill="none"/>
<path d="M1147.4 173 V194.7 M1153 173 V194.7 M1160.7 173 V194.7 M1165.3 173 V194.7 M1169.8 176.2 V191.4" stroke="#2a2a30" stroke-width="1" fill="none"/>
<path d="M1117.6 184 V202.5 H1124.2 M1139.8 202.5 H1157 V184" stroke="#2a2a30" stroke-width="1" fill="none"/>
<rect x="1124.2" y="199.4" width="15.6" height="6.2" rx="2.4" fill="#fff" stroke="#2a2a30" stroke-width="1"/>
<path d="M1151 244 H1155 M1160.7 244 H1164.5" stroke="#2a2a30" stroke-width="1" fill="none"/>
<path d="M1155 233.1 V254.7 M1160.7 233.1 V254.7 M1164.5 236.2 V251.7" stroke="#2a2a30" stroke-width="1" fill="none"/>
<path d="M1125.4 244 V262.4 H1131.8 M1147.3 262.4 H1153.4 V244" stroke="#2a2a30" stroke-width="1" fill="none"/>
<rect x="1131.8" y="259.4" width="15.5" height="6.2" rx="2.4" fill="#fff" stroke="#2a2a30" stroke-width="1"/>
<path d="M1148.3 333.8 H1152.5" stroke="#2a2a30" stroke-width="1" fill="none"/>
<path d="M1152.5 323.3 V344.5 M1156.6 326.3 V341.5" stroke="#2a2a30" stroke-width="1" fill="none"/>
<text transform="translate(1178.2,187.4) scale(1.18,1)" x="0" y="0" textLength="52.80" lengthAdjust="spacing" font-family="Liberation Serif,serif" font-size="7.4" fill="#2b2b2b">ShuntFilter3</text>
<text transform="translate(1171.2,247.3) scale(1.18,1)" x="0" y="0" textLength="51.95" lengthAdjust="spacing" font-family="Liberation Serif,serif" font-size="7.4" fill="#2b2b2b">ShuntFilter4</text>
<text transform="translate(1163.2,336.8) scale(1.18,1)" x="0" y="0" textLength="52.80" lengthAdjust="spacing" font-family="Liberation Serif,serif" font-size="7.4" fill="#2b2b2b">ShuntFilter5</text>
<text transform="translate(941,161.2) scale(1.18,1)" x="0" y="0" textLength="21.69" lengthAdjust="spacing" font-family="Liberation Serif,serif" font-size="7.4" fill="#2b2b2b">Bus23</text>
<text transform="translate(941,258.2) scale(1.18,1)" x="0" y="0" textLength="21.69" lengthAdjust="spacing" font-family="Liberation Serif,serif" font-size="7.4" fill="#2b2b2b">Bus26</text>
<text transform="translate(938.2,195.2) scale(1.18,1)" x="0" y="0" textLength="25.42" lengthAdjust="spacing" font-family="Liberation Serif,serif" font-size="7.4" fill="#2b2b2b">Valve2</text>
<text transform="translate(938.2,291.8) scale(1.18,1)" x="0" y="0" textLength="25.42" lengthAdjust="spacing" font-family="Liberation Serif,serif" font-size="7.4" fill="#2b2b2b">Valve3</text>
<text transform="translate(870.2,231.4) scale(1.18,1)" x="0" y="0" textLength="21.53" lengthAdjust="spacing" font-family="Liberation Serif,serif" font-size="7.4" fill="#2b2b2b">Bus25</text>
<text transform="translate(870.2,321.4) scale(1.18,1)" x="0" y="0" textLength="21.53" lengthAdjust="spacing" font-family="Liberation Serif,serif" font-size="7.4" fill="#2b2b2b">Bus24</text>
<text transform="translate(1002.2,213) scale(1.18,1)" x="0" y="0" textLength="8.14" lengthAdjust="spacing" font-family="Liberation Serif,serif" font-size="7.4" fill="#2b2b2b">T2</text>
<text transform="translate(1002.2,311) scale(1.18,1)" x="0" y="0" textLength="8.14" lengthAdjust="spacing" font-family="Liberation Serif,serif" font-size="7.4" fill="#2b2b2b">T3</text>
<text transform="translate(899,386.4) scale(1.18,1)" x="0" y="0" textLength="30.51" lengthAdjust="spacing" font-family="Liberation Serif,serif" font-size="7.4" fill="#2b2b2b">Ground4</text>
</svg>

<div class="abs" style="left:1280px;top:161px;width:295px;height:230px;background:#e6edf8;border:1px solid #a9c3df"></div>
<div class="abs" style="left:1281px;top:162px;width:293px;height:24px;background:#d0e0f0"></div>
<span class="abs" style="left:1290px;top:164px;font-size:14px;font-weight:bold;line-height:20px;color:#3c4254">导航窗</span>
<div class="abs" style="left:1549px;top:165px;width:16px;height:16px;background:#b3c7dc;border-radius:2px"></div>
<svg class="abs" style="left:1549px;top:165px" width="16" height="16" viewBox="0 0 16 16"><path d="M3.2 3.2 L12.8 12.8 M12.8 3.2 L3.2 12.8" stroke="#333" stroke-width="1.1"/></svg>
<svg class="abs" style="left:1295px;top:186px" width="265" height="204" viewBox="1295 186 265 204">
<defs><pattern id="mg" x="1296.2" y="195" width="6.62" height="6.62" patternUnits="userSpaceOnUse"><rect x="0" y="0" width="6.62" height="6.62" fill="#fff"/><rect x="0.9" y="0.9" width="5.72" height="5.72" fill="#f5f7fa"/></pattern></defs>
<rect x="1295" y="186" width="265" height="204" fill="#fafafa"/>
<rect x="1296.2" y="195" width="261.4" height="185.4" fill="url(#mg)"/>
<g transform="translate(1296.74,196.64) scale(0.1555)" opacity="0.85">
<path d="M347 184 H435" stroke="#6f6f6f" stroke-width="3.6399999999999997" fill="none"/>
<path d="M469.8 184 H524.4" stroke="#6f6f6f" stroke-width="3.6399999999999997" fill="none"/>
<path d="M347 244 H512.8 V199.2" stroke="#303030" stroke-width="3.6399999999999997" fill="none"/>
<path d="M512.8 199.2 H524.4" stroke="#777" stroke-width="3.9000000000000004" fill="none"/>
<path d="M400 281.4 H435" stroke="#6f6f6f" stroke-width="3.6399999999999997" fill="none"/>
<path d="M469.8 281.4 H524.4" stroke="#6f6f6f" stroke-width="3.6399999999999997" fill="none"/>
<path d="M347 333.6 H512.8 V296.3" stroke="#303030" stroke-width="3.6399999999999997" fill="none"/>
<path d="M512.8 296.3 H524.4" stroke="#777" stroke-width="3.9000000000000004" fill="none"/>
<path d="M535.2 156 V180.4" stroke="#6f6f6f" stroke-width="3.6399999999999997" fill="none"/>
<path d="M535.2 202.4 V278.4" stroke="#6f6f6f" stroke-width="3.6399999999999997" fill="none"/>
<path d="M535.2 300 V356.3" stroke="#6f6f6f" stroke-width="3.6399999999999997" fill="none"/>
<path d="M347 165 H349.5 V184" stroke="#333" stroke-width="2.6" fill="none"/>
<path d="M400 156 L400 349.2" stroke="#000" stroke-width="7.2" fill="none"/>
<circle cx="445" cy="184" r="10" fill="none" stroke="#2a2a30" stroke-width="1"/><circle cx="459.9" cy="184" r="10" fill="none" stroke="#2a2a30" stroke-width="1"/>
<text x="434.4" y="196" text-anchor="middle" font-family="Liberation Sans,sans-serif" font-size="8.2" fill="#222">H</text>
<text x="471.5" y="196" text-anchor="middle" font-family="Liberation Sans,sans-serif" font-size="8.2" fill="#222">L</text>
<circle cx="445" cy="281.4" r="10" fill="none" stroke="#2a2a30" stroke-width="1"/><circle cx="459.9" cy="281.4" r="10" fill="none" stroke="#2a2a30" stroke-width="1"/>
<text x="434.4" y="293.4" text-anchor="middle" font-family="Liberation Sans,sans-serif" font-size="8.2" fill="#222">H</text>
<text x="471.5" y="293.4" text-anchor="middle" font-family="Liberation Sans,sans-serif" font-size="8.2" fill="#222">L</text>
<path d="M470 184 L484.4 184" stroke="#000" stroke-width="2.2" fill="none"/>
<path d="M510.3 184 L521 184" stroke="#000" stroke-width="2.2" fill="none"/>
<rect x="482.0" y="181.6" width="4.8" height="4.8" rx="0.8" fill="#000"/>
<rect x="507.9" y="181.6" width="4.8" height="4.8" rx="0.8" fill="#000"/>
<rect x="410.4" y="181.6" width="4.8" height="4.8" rx="0.8" fill="#000"/>
<path d="M470 281.4 L484.4 281.4" stroke="#000" stroke-width="2.2" fill="none"/>
<path d="M510.3 281.4 L521 281.4" stroke="#000" stroke-width="2.2" fill="none"/>
<rect x="482.0" y="279.0" width="4.8" height="4.8" rx="0.8" fill="#000"/>
<rect x="507.9" y="279.0" width="4.8" height="4.8" rx="0.8" fill="#000"/>
<rect x="410.4" y="279.0" width="4.8" height="4.8" rx="0.8" fill="#000"/>
<rect x="384.9" y="181.6" width="4.8" height="4.8" rx="0.8" fill="#000"/>
<rect x="384.9" y="241.6" width="4.8" height="4.8" rx="0.8" fill="#000"/>
<rect x="410.4" y="241.6" width="4.8" height="4.8" rx="0.8" fill="#000"/>
<rect x="384.9" y="331.2" width="4.8" height="4.8" rx="0.8" fill="#000"/>
<rect x="410.4" y="331.2" width="4.8" height="4.8" rx="0.8" fill="#000"/>
<circle cx="400" cy="184" r="2.6" fill="#000"/>
<circle cx="400" cy="244" r="2.6" fill="#000"/>
<circle cx="400" cy="281.4" r="2.6" fill="#000"/>
<circle cx="400" cy="333.6" r="2.6" fill="#000"/>
<path d="M497.3 169.2 L497.3 198.8" stroke="#000" stroke-width="6" fill="none"/>
<path d="M498.8 171.2 h2.6 M498.8 173.39999999999998 h2.6 M498.8 175.6 h2.6 M493.3 170.39999999999998 h2.4 M493.3 172.39999999999998 h2.4 M493.3 174.39999999999998 h2.4" stroke="#222" stroke-width="0.9" fill="none"/>
<path d="M497.3 266.4 L497.3 296.2" stroke="#000" stroke-width="6" fill="none"/>
<path d="M498.8 268.4 h2.6 M498.8 270.59999999999997 h2.6 M498.8 272.79999999999995 h2.6 M493.3 267.59999999999997 h2.4 M493.3 269.59999999999997 h2.4 M493.3 271.59999999999997 h2.4" stroke="#222" stroke-width="0.9" fill="none"/>
<circle cx="497.3" cy="184" r="2.2" fill="#000"/><circle cx="497.3" cy="281.4" r="2.2" fill="#000"/>
<rect x="524.3" y="180.4" width="21.8" height="22" rx="1.4" fill="#fff" stroke="#2a2a30" stroke-width="1.1"/>
<path d="M535.1999999999999 184.4 V199.6" stroke="#2a2a30" stroke-width="1" fill="none"/>
<path d="M528.1999999999999 189.0 H542.1999999999999 M528.1999999999999 199.20000000000002 H542.1999999999999" stroke="#777" stroke-width="1.5" fill="none"/>
<path d="M535.1999999999999 189.0 L541.9999999999999 199.20000000000002 M535.1999999999999 189.0 L528.4 199.20000000000002 M535.1999999999999 189.0 L542.4 183.8" stroke="#2a2a30" stroke-width="1" fill="none"/>
<rect x="524.3" y="278.2" width="21.8" height="22" rx="1.4" fill="#fff" stroke="#2a2a30" stroke-width="1.1"/>
<path d="M535.1999999999999 282.2 V297.4" stroke="#2a2a30" stroke-width="1" fill="none"/>
<path d="M528.1999999999999 286.8 H542.1999999999999 M528.1999999999999 297.0 H542.1999999999999" stroke="#777" stroke-width="1.5" fill="none"/>
<path d="M535.1999999999999 286.8 L541.9999999999999 297.0 M535.1999999999999 286.8 L528.4 297.0 M535.1999999999999 286.8 L542.4 281.59999999999997" stroke="#2a2a30" stroke-width="1" fill="none"/>
<path d="M535.2 203 L535.2 216" stroke="#000" stroke-width="2.2" fill="none"/>
<rect x="532.8" y="213.8" width="4.8" height="4.8" rx="0.8" fill="#000"/>
<rect x="532.8" y="239.2" width="4.8" height="4.8" rx="0.8" fill="#000"/>
<path d="M535.2 300.5 L535.2 306" stroke="#000" stroke-width="2.2" fill="none"/>
<rect x="532.8" y="303.8" width="4.8" height="4.8" rx="0.8" fill="#000"/>
<path d="M535.2 331.6 L535.2 342" stroke="#000" stroke-width="2.2" fill="none"/>
<rect x="532.8" y="329.2" width="4.8" height="4.8" rx="0.8" fill="#000"/>
<path d="M520 229 L550.4 229" stroke="#000" stroke-width="6.4" fill="none"/>
<path d="M524.5 225.2 L522 232.8" stroke="#111" stroke-width="1" fill="none"/>
<path d="M520 319 L550.4 319" stroke="#000" stroke-width="6.4" fill="none"/>
<path d="M524.5 315.2 L522 322.8" stroke="#111" stroke-width="1" fill="none"/>
<circle cx="535.2" cy="229" r="2.2" fill="#000"/><circle cx="535.2" cy="319" r="2.2" fill="#000"/>
<path d="M527.6 356.3 H542.8000000000001" stroke="#222" stroke-width="1.3"/><path d="M530.2 361.7 H540.2" stroke="#555" stroke-width="1.3"/><path d="M532.3000000000001 366.90000000000003 H538.1" stroke="#999" stroke-width="1.8"/>
<text transform="translate(484,161.2) scale(1.18,1)" x="0" y="0" textLength="22.03" lengthAdjust="spacing" font-family="Liberation Serif,serif" font-size="7.4" fill="#000" font-weight="bold">Bus19</text>
<text transform="translate(484,258.2) scale(1.18,1)" x="0" y="0" textLength="22.03" lengthAdjust="spacing" font-family="Liberation Serif,serif" font-size="7.4" fill="#000" font-weight="bold">Bus20</text>
<text transform="translate(556.2,195.2) scale(1.18,1)" x="0" y="0" textLength="21.69" lengthAdjust="spacing" font-family="Liberation Serif,serif" font-size="7.4" fill="#000" font-weight="bold">Valve</text>
<text transform="translate(556.2,231.4) scale(1.18,1)" x="0" y="0" textLength="20.85" lengthAdjust="spacing" font-family="Liberation Serif,serif" font-size="7.4" fill="#000" font-weight="bold">Bus21</text>
<text transform="translate(556.2,291.8) scale(1.18,1)" x="0" y="0" textLength="25.42" lengthAdjust="spacing" font-family="Liberation Serif,serif" font-size="7.4" fill="#000" font-weight="bold">Valve1</text>
<text transform="translate(556.2,321.4) scale(1.18,1)" x="0" y="0" textLength="20.85" lengthAdjust="spacing" font-family="Liberation Serif,serif" font-size="7.4" fill="#000" font-weight="bold">Bus22</text>
<text transform="translate(447.5,213) scale(1.18,1)" x="0" y="0" textLength="7.29" lengthAdjust="spacing" font-family="Liberation Serif,serif" font-size="7.4" fill="#000" font-weight="bold">T1</text>
<text transform="translate(448.5,311) scale(1.18,1)" x="0" y="0" textLength="8.14" lengthAdjust="spacing" font-family="Liberation Serif,serif" font-size="7.4" fill="#000" font-weight="bold">T4</text>
<text transform="translate(516.5,386.4) scale(1.18,1)" x="0" y="0" textLength="30.93" lengthAdjust="spacing" font-family="Liberation Serif,serif" font-size="7.4" fill="#000" font-weight="bold">Ground3</text>
<path d="M624.7 161.4 H697.6 M702.5 161.4 H737.7" stroke="#111" stroke-width="2.9899999999999998" fill="none"/>
<path d="M624.7 161.4 V191.4" stroke="#777" stroke-width="3.6399999999999997" fill="none"/>
<path d="M617.3 191.4 H632.5" stroke="#222" stroke-width="1.3"/><path d="M619.9 196.8 H629.9" stroke="#666" stroke-width="1.3"/><path d="M622.0 202.0 H627.8" stroke="#aaa" stroke-width="1.8"/>
<path d="M697.6 156 V166.8 M702.5 156 V166.8" stroke="#333" stroke-width="2.8600000000000003" fill="none"/>
<path d="M662.3 156 L662.3 213.8" stroke="#000" stroke-width="6.8" fill="none"/>
<path d="M737.7 156 L737.7 221.8" stroke="#000" stroke-width="6.8" fill="none"/>
<rect x="647.3" y="159.0" width="4.8" height="4.8" rx="0.8" fill="#000"/>
<rect x="672.8" y="159.0" width="4.8" height="4.8" rx="0.8" fill="#000"/>
<rect x="722.4" y="159.0" width="4.8" height="4.8" rx="0.8" fill="#000"/>
<circle cx="662.3" cy="161.4" r="2.4" fill="#000"/><circle cx="737.7" cy="161.4" r="2.4" fill="#000"/><circle cx="662.3" cy="198.9" r="2.4" fill="#000"/>
<path d="M662.3 198.9 H675" stroke="#777" stroke-width="4.16" fill="none"/>
<path d="M675.2 198.9 L685.4 198.9" stroke="#000" stroke-width="2.2" fill="none"/>
<rect x="672.8" y="196.5" width="4.8" height="4.8" rx="0.8" fill="#000"/>
<path d="M685.4 198.9 H693" stroke="#c6c6c6" stroke-width="4.680000000000001" fill="none"/>
<path d="M693 198.9 L701.4 192.3" stroke="#888" stroke-width="2.6" fill="none"/>
<path d="M701.4 195.3 L708.6 202.5 M708.6 195.3 L701.4 202.5" stroke="#8a8a8a" stroke-width="2.6" fill="none"/>
<path d="M705 198.9 H714" stroke="#c9c9c9" stroke-width="4.680000000000001" fill="none"/>
<path d="M714 198.9 H723" stroke="#8a8a8a" stroke-width="4.680000000000001" fill="none"/>
<path d="M727 198.9 H736" stroke="#c9c9c9" stroke-width="4.680000000000001" fill="none"/>
<circle cx="724.8" cy="198.9" r="2.1" fill="#fff" stroke="#999" stroke-width="1"/>
<rect x="735.5" y="196.7" width="4.4" height="4.4" rx="0.8" fill="#8a8a8a"/>
<text transform="translate(606,221) scale(1.18,1)" x="0" y="0" textLength="30.08" lengthAdjust="spacing" font-family="Liberation Serif,serif" font-size="7.4" fill="#000" font-weight="bold">Ground1</text>
<text transform="translate(679,221) scale(1.18,1)" x="0" y="0" textLength="33.56" lengthAdjust="spacing" font-family="Liberation Serif,serif" font-size="7.4" fill="#000" font-weight="bold">Breaker1</text>
<text transform="translate(693.6,183.2) scale(1.18,1)" x="0" y="0" textLength="9.66" lengthAdjust="spacing" font-family="Liberation Serif,serif" font-size="7.4" fill="#000" font-weight="bold">C4</text>
<path d="M917.4 156 V180.4" stroke="#222" stroke-width="2.8600000000000003" fill="none"/>
<path d="M917.4 202.4 V278.4" stroke="#151515" stroke-width="3.3800000000000003" fill="none"/>
<path d="M917.4 300 V356.3" stroke="#151515" stroke-width="3.3800000000000003" fill="none"/>
<path d="M929 184 H990" stroke="#2a2a2a" stroke-width="3.12" fill="none"/>
<path d="M1024.6 184 H1131.8" stroke="#6f6f6f" stroke-width="3.6399999999999997" fill="none"/>
<path d="M940 199.2 V244 H1139.4" stroke="#6a6a6a" stroke-width="3.9000000000000004" fill="none"/>
<path d="M929 199.2 H940.6" stroke="#222" stroke-width="2.6" fill="none"/>
<path d="M929 281.4 H990" stroke="#2a2a2a" stroke-width="3.12" fill="none"/>
<path d="M1024.6 281.4 H1067.5" stroke="#6f6f6f" stroke-width="3.6399999999999997" fill="none"/>
<path d="M940 296.3 V333.6 H1136.8" stroke="#6a6a6a" stroke-width="3.9000000000000004" fill="none"/>
<path d="M929 296.3 H940.6" stroke="#222" stroke-width="2.6" fill="none"/>
<rect x="906.5" y="180.4" width="21.8" height="22" rx="1.4" fill="#fff" stroke="#2a2a30" stroke-width="1.1"/>
<path d="M917.4 184.4 V199.6" stroke="#2a2a30" stroke-width="1" fill="none"/>
<path d="M910.4 189.0 H924.4 M910.4 199.20000000000002 H924.4" stroke="#777" stroke-width="1.5" fill="none"/>
<path d="M917.4 189.0 L924.1999999999999 199.20000000000002 M917.4 189.0 L910.6 199.20000000000002 M917.4 189.0 L910.1999999999999 183.8" stroke="#2a2a30" stroke-width="1" fill="none"/>
<rect x="906.5" y="278.2" width="21.8" height="22" rx="1.4" fill="#fff" stroke="#2a2a30" stroke-width="1.1"/>
<path d="M917.4 282.2 V297.4" stroke="#2a2a30" stroke-width="1" fill="none"/>
<path d="M910.4 286.8 H924.4 M910.4 297.0 H924.4" stroke="#777" stroke-width="1.5" fill="none"/>
<path d="M917.4 286.8 L924.1999999999999 297.0 M917.4 286.8 L910.6 297.0 M917.4 286.8 L910.1999999999999 281.59999999999997" stroke="#2a2a30" stroke-width="1" fill="none"/>
<rect x="939.8" y="181.6" width="4.8" height="4.8" rx="0.8" fill="#000"/>
<rect x="965.3" y="181.6" width="4.8" height="4.8" rx="0.8" fill="#000"/>
<rect x="939.8" y="279.0" width="4.8" height="4.8" rx="0.8" fill="#000"/>
<rect x="965.3" y="279.0" width="4.8" height="4.8" rx="0.8" fill="#000"/>
<path d="M955.2 169.2 L955.2 198.8" stroke="#000" stroke-width="6" fill="none"/>
<path d="M956.7 171.2 h2.6 M956.7 173.39999999999998 h2.6 M956.7 175.6 h2.6 M951.2 170.39999999999998 h2.4 M951.2 172.39999999999998 h2.4 M951.2 174.39999999999998 h2.4" stroke="#222" stroke-width="0.9" fill="none"/>
<path d="M955.2 266.4 L955.2 296.2" stroke="#000" stroke-width="6" fill="none"/>
<path d="M956.7 268.4 h2.6 M956.7 270.59999999999997 h2.6 M956.7 272.79999999999995 h2.6 M951.2 267.59999999999997 h2.4 M951.2 269.59999999999997 h2.4 M951.2 271.59999999999997 h2.4" stroke="#222" stroke-width="0.9" fill="none"/>
<circle cx="955.2" cy="184" r="2.2" fill="#000"/><circle cx="955.2" cy="281.4" r="2.2" fill="#000"/>
<circle cx="1000.2" cy="184" r="10" fill="none" stroke="#2a2a30" stroke-width="1"/><circle cx="1014.6" cy="184" r="10" fill="none" stroke="#2a2a30" stroke-width="1"/>
<text x="989.6" y="177" text-anchor="middle" font-family="Liberation Sans,sans-serif" font-size="8.2" fill="#222">L</text>
<text x="1026.2" y="177" text-anchor="middle" font-family="Liberation Sans,sans-serif" font-size="8.2" fill="#222">H</text>
<circle cx="1000.2" cy="281.4" r="10" fill="none" stroke="#2a2a30" stroke-width="1"/><circle cx="1014.6" cy="281.4" r="10" fill="none" stroke="#2a2a30" stroke-width="1"/>
<text x="989.6" y="274.4" text-anchor="middle" font-family="Liberation Sans,sans-serif" font-size="8.2" fill="#222">L</text>
<text x="1026.2" y="274.4" text-anchor="middle" font-family="Liberation Sans,sans-serif" font-size="8.2" fill="#222">H</text>
<rect x="915.0" y="213.8" width="4.8" height="4.8" rx="0.8" fill="#000"/>
<rect x="915.0" y="239.2" width="4.8" height="4.8" rx="0.8" fill="#000"/>
<rect x="915.0" y="303.8" width="4.8" height="4.8" rx="0.8" fill="#000"/>
<rect x="915.0" y="329.2" width="4.8" height="4.8" rx="0.8" fill="#000"/>
<path d="M902.2 229 L932.8 229" stroke="#000" stroke-width="6.4" fill="none"/>
<path d="M906.7 225.2 L904.2 232.8" stroke="#111" stroke-width="1" fill="none"/>
<path d="M902.2 319 L932.8 319" stroke="#000" stroke-width="6.4" fill="none"/>
<path d="M906.7 315.2 L904.2 322.8" stroke="#111" stroke-width="1" fill="none"/>
<circle cx="917.4" cy="229" r="2.2" fill="#000"/><circle cx="917.4" cy="319" r="2.2" fill="#000"/>
<path d="M910.0 356.3 H925.2" stroke="#222" stroke-width="1.3"/><path d="M912.6 361.7 H922.6" stroke="#555" stroke-width="1.3"/><path d="M914.7 366.90000000000003 H920.5" stroke="#999" stroke-width="1.8"/>
<rect x="1059" y="58" width="18" height="300" fill="#1ec0f5"/>
<rect x="1064.8" y="352.8" width="5.6" height="4.6" fill="#fff" stroke="#1ec0f5" stroke-width="1.2"/>
<rect x="1052.2" y="181.6" width="4.8" height="4.8" rx="0.8" fill="#000"/>
<rect x="1077.8" y="181.6" width="4.8" height="4.8" rx="0.8" fill="#000"/>
<circle cx="1067.6" cy="184" r="2.3" fill="#000"/>
<rect x="1052.2" y="241.6" width="4.8" height="4.8" rx="0.8" fill="#000"/>
<rect x="1077.8" y="241.6" width="4.8" height="4.8" rx="0.8" fill="#000"/>
<circle cx="1067.6" cy="244" r="2.3" fill="#000"/>
<rect x="1052.2" y="279.0" width="4.8" height="4.8" rx="0.8" fill="#000"/>
<circle cx="1067.6" cy="281.4" r="2.3" fill="#000"/>
<rect x="1052.2" y="331.2" width="4.8" height="4.8" rx="0.8" fill="#000"/>
<rect x="1077.8" y="331.2" width="4.8" height="4.8" rx="0.8" fill="#000"/>
<circle cx="1067.6" cy="333.6" r="2.3" fill="#000"/>
<path d="M1143.3 184 A11.5 11.5 0 1 0 1131.8 195.5 V184 " stroke="#2a2a30" stroke-width="1" fill="none"/>
<path d="M1150.9 244 A11.5 11.5 0 1 0 1139.4 255.5 V244 " stroke="#2a2a30" stroke-width="1" fill="none"/>
<path d="M1148.3 333.8 A11.5 11.5 0 1 0 1136.8 345.3 V333.8 " stroke="#2a2a30" stroke-width="1" fill="none"/>
<path d="M1143.3 184 H1147.4 M1153 184 H1160.7 M1165.3 184 H1169.8" stroke="#2a2a30" stroke-width="2.6" fill="none"/>
<path d="M1147.4 173 V194.7 M1153 173 V194.7 M1160.7 173 V194.7 M1165.3 173 V194.7 M1169.8 176.2 V191.4" stroke="#2a2a30" stroke-width="2.6" fill="none"/>
<path d="M1117.6 184 V202.5 H1124.2 M1139.8 202.5 H1157 V184" stroke="#2a2a30" stroke-width="2.6" fill="none"/>
<rect x="1124.2" y="199.4" width="15.6" height="6.2" rx="2.4" fill="#fff" stroke="#2a2a30" stroke-width="1"/>
<path d="M1151 244 H1155 M1160.7 244 H1164.5" stroke="#2a2a30" stroke-width="2.6" fill="none"/>
<path d="M1155 233.1 V254.7 M1160.7 233.1 V254.7 M1164.5 236.2 V251.7" stroke="#2a2a30" stroke-width="2.6" fill="none"/>
<path d="M1125.4 244 V262.4 H1131.8 M1147.3 262.4 H1153.4 V244" stroke="#2a2a30" stroke-width="2.6" fill="none"/>
<rect x="1131.8" y="259.4" width="15.5" height="6.2" rx="2.4" fill="#fff" stroke="#2a2a30" stroke-width="1"/>
<path d="M1148.3 333.8 H1152.5" stroke="#2a2a30" stroke-width="2.6" fill="none"/>
<path d="M1152.5 323.3 V344.5 M1156.6 326.3 V341.5" stroke="#2a2a30" stroke-width="2.6" fill="none"/>
<text transform="translate(1178.2,187.4) scale(1.18,1)" x="0" y="0" textLength="52.80" lengthAdjust="spacing" font-family="Liberation Serif,serif" font-size="7.4" fill="#000" font-weight="bold">ShuntFilter3</text>
<text transform="translate(1171.2,247.3) scale(1.18,1)" x="0" y="0" textLength="51.95" lengthAdjust="spacing" font-family="Liberation Serif,serif" font-size="7.4" fill="#000" font-weight="bold">ShuntFilter4</text>
<text transform="translate(1163.2,336.8) scale(1.18,1)" x="0" y="0" textLength="52.80" lengthAdjust="spacing" font-family="Liberation Serif,serif" font-size="7.4" fill="#000" font-weight="bold">ShuntFilter5</text>
<text transform="translate(941,161.2) scale(1.18,1)" x="0" y="0" textLength="21.69" lengthAdjust="spacing" font-family="Liberation Serif,serif" font-size="7.4" fill="#000" font-weight="bold">Bus23</text>
<text transform="translate(941,258.2) scale(1.18,1)" x="0" y="0" textLength="21.69" lengthAdjust="spacing" font-family="Liberation Serif,serif" font-size="7.4" fill="#000" font-weight="bold">Bus26</text>
<text transform="translate(938.2,195.2) scale(1.18,1)" x="0" y="0" textLength="25.42" lengthAdjust="spacing" font-family="Liberation Serif,serif" font-size="7.4" fill="#000" font-weight="bold">Valve2</text>
<text transform="translate(938.2,291.8) scale(1.18,1)" x="0" y="0" textLength="25.42" lengthAdjust="spacing" font-family="Liberation Serif,serif" font-size="7.4" fill="#000" font-weight="bold">Valve3</text>
<text transform="translate(870.2,231.4) scale(1.18,1)" x="0" y="0" textLength="21.53" lengthAdjust="spacing" font-family="Liberation Serif,serif" font-size="7.4" fill="#000" font-weight="bold">Bus25</text>
<text transform="translate(870.2,321.4) scale(1.18,1)" x="0" y="0" textLength="21.53" lengthAdjust="spacing" font-family="Liberation Serif,serif" font-size="7.4" fill="#000" font-weight="bold">Bus24</text>
<text transform="translate(1002.2,213) scale(1.18,1)" x="0" y="0" textLength="8.14" lengthAdjust="spacing" font-family="Liberation Serif,serif" font-size="7.4" fill="#000" font-weight="bold">T2</text>
<text transform="translate(1002.2,311) scale(1.18,1)" x="0" y="0" textLength="8.14" lengthAdjust="spacing" font-family="Liberation Serif,serif" font-size="7.4" fill="#000" font-weight="bold">T3</text>
<text transform="translate(899,386.4) scale(1.18,1)" x="0" y="0" textLength="30.51" lengthAdjust="spacing" font-family="Liberation Serif,serif" font-size="7.4" fill="#000" font-weight="bold">Ground4</text>
<!-- extra (outside viewport) mini elements, in canvas coordinates -->
<g stroke="#333" fill="none" stroke-width="5">
<path d="M400 58 V156 M662.3 146 V156 M737.7 58 V156 M328 58 V140 M248 62 V92 M602 62 V92 M1143 58 V140 M1276 58 V140 M1359 62 V92 M1452 62 V92"/>
</g>
<g font-family="Liberation Serif,serif" font-size="8" font-weight="bold" fill="#000"><text x="232" y="187" textLength="62" lengthAdjust="spacing">ShuntFilter</text><text x="232" y="247" textLength="62" lengthAdjust="spacing">ShuntFilter1</text><text x="232" y="337" textLength="62" lengthAdjust="spacing">ShuntFilter2</text><text x="236" y="62" textLength="24">Bus1</text><text x="316" y="56" textLength="24">Bus2</text><text x="388" y="56" textLength="24">Bus3</text><text x="590" y="62" textLength="24">Bus5</text><text x="726" y="56" textLength="24">Bus6</text><text x="902" y="62" textLength="24">Bus7</text><text x="1050" y="56" textLength="24">Bus8</text><text x="1132" y="56" textLength="24">Bus9</text><text x="1264" y="56" textLength="28">Bus10</text><text x="1346" y="62" textLength="28">Bus11</text><text x="545" y="98" textLength="70">TransLine</text><text x="745" y="98" textLength="70">TransLine1</text><text x="1170" y="134" textLength="70">TransLine2</text><text x="1170" y="62" textLength="14">L1</text><text x="270" y="98" textLength="14">T5</text><text x="1090" y="98" textLength="14">T6</text><text x="1330" y="98" textLength="14">T7</text><text x="190" y="98" textLength="14">G1</text><text x="1420" y="80" textLength="20">Load</text></g>
<g stroke="#777" fill="none" stroke-width="3.2">
<path d="M205 76 H400 M328 122 H400 M535.2 156 V76 H917.4 V156 M1067 76 H1490 M1143 112 H1276 M230 184 H347 M230 244 H347 M230 333.6 H347"/>
<circle cx="200" cy="76" r="8"/><circle cx="1410" cy="76" r="8"/><circle cx="318" cy="184" r="9"/><circle cx="318" cy="244" r="9"/><circle cx="318" cy="333.6" r="9"/>
<rect x="560" y="70" width="30" height="12"/><rect x="760" y="70" width="30" height="12"/><rect x="1180" y="70" width="60" height="12"/><rect x="1180" y="106" width="60" height="12"/>
</g>
</g>
<rect x="1351.6" y="221.8" width="192.4" height="79" fill="none" stroke="#3fc8f5" stroke-width="1.6"/>
<g stroke="#9a9a9a" stroke-width="0.5" fill="none"><rect x="1510.3" y="365.8" width="47" height="12.6" fill="#fff"/><path d="M1510.3 369 H1557.3 M1510.3 372.2 H1557.3 M1510.3 375.3 H1557.3 M1518 365.8 V378.4 M1535 369 V375.3 M1545.5 369 V375.3"/></g>
</svg>


<!-- canvas scrollbars -->
<div class="abs" style="left:1582px;top:156px;width:8px;height:514px;background:#fff"></div>
<div class="abs" style="left:1583px;top:227px;width:8px;height:211px;background:#d5d5d5;border-radius:4px"></div>
<div class="abs" style="left:347px;top:662px;width:1235px;height:8px;background:#fff"></div>
<div class="abs" style="left:607px;top:662px;width:902px;height:8px;background:#d5d5d5;border-radius:4px"></div>
<div class="abs" style="left:1583px;top:662px;width:7px;height:8px;background:#efefef"></div>
<div id="info">
 <div id="infohead"><span class="abs" style="left:7px;top:2px;font-size:14px;font-weight:bold;line-height:20px;color:#0b4a8c">信息</span></div>
</div>
<div class="ftab" style="left:357px"><i class="abs" style="left:6px;top:8px;width:9px;height:9px;background:#c98a52"></i><span class="abs" style="left:17px">错误</span><span class="abs" style="left:53px">0</span></div>
<div class="ftab" style="left:456px"><i class="abs" style="left:6px;top:8px;width:9px;height:9px;background:#d69b5c"></i><span class="abs" style="left:17px">警告</span><span class="abs" style="left:53px">3</span></div>
<div class="ftab" style="left:555px"><i class="abs" style="left:6px;top:8px;width:9px;height:9px;background:#2c2c30"></i><span class="abs" style="left:17px">消息</span><span class="abs" style="left:53px">195</span></div>
<div class="ftab" style="left:654px"><i class="abs" style="left:6px;top:8px;width:9px;height:9px;background:#2c2c30"></i><span class="abs" style="left:17px">其他</span><span class="abs" style="left:53px">226</span></div>
<div class="abs" style="left:454px;top:716px;width:1px;height:22px;background:#d0d0d0"></div><div class="abs" style="left:553px;top:716px;width:1px;height:22px;background:#d0d0d0"></div><div class="abs" style="left:652px;top:716px;width:1px;height:22px;background:#d0d0d0"></div>
<div class="abs" style="left:1113px;top:714px;width:355px;height:26px;border:1px solid #b5b5b5;background:#fff">
 <svg class="abs" style="left:1px;top:3px" width="18" height="18" viewBox="0 0 18 18"><circle cx="7.2" cy="7.4" r="4.5" fill="none" stroke="#0b4a8c" stroke-width="1.5"/><path d="M10.6 10.9 l4.2 4.2" stroke="#0b4a8c" stroke-width="2.3" stroke-linecap="round"/><path d="M4.6 6.6 a3 3 0 0 1 2.2 -2.2" fill="none" stroke="#7aa3cf" stroke-width="0.9"/></svg>
 <span class="abs" style="left:24px;top:3px;font-size:14px;line-height:20px;color:#8fbde0">搜索</span>
</div>
<svg class="abs" style="left:1474px;top:714px" width="110" height="28" viewBox="1474 714 110 28" fill="#013a75">
 <!-- copy -->
 <rect x="1482.6" y="723" width="10.4" height="11.6" rx="1.6" fill="none" stroke="#013a75" stroke-width="1.3"/><rect x="1478.4" y="719.2" width="10.6" height="12.4" rx="1.6"/><path d="M1480.4 722.6 h6.4 M1480.4 725.3 h6.4 M1480.4 728 h4.4" stroke="#fff" stroke-width="1"/>
 <!-- trash -->
 <path d="M1507 721.6 h13.6 v1.9 h-13.6 z M1511.3 719.6 h5 v2 h-5 z M1508.6 724.6 h10.4 l-0.5 10 h-9.4 z"/><path d="M1512 726.6 v6 M1515.6 726.6 v6" stroke="#fff" stroke-width="1.1"/>
 <!-- folder -->
 <path d="M1534 733.6 v-12.6 a1 1 0 0 1 1 -1 h4.6 l1.6 1.8 h6.6 a1 1 0 0 1 1 1 v1.6 h-11.2 z"/><path d="M1534.4 734 l3.4 -8.2 h12.8 l-2.8 8.2 z"/>
 <!-- print -->
 <path d="M1565.4 719.6 h8.6 v3 h-8.6 z" fill="none" stroke="#013a75" stroke-width="1.2"/><path d="M1561.6 723.6 h16.4 v8.4 h-3 v-3.4 h-10.4 v3.4 h-3 z"/><rect x="1566" y="730" width="7.6" height="4.6"/><rect x="1574.2" y="725.2" width="1.8" height="1.2" fill="#fff"/>
</svg>
<div class="abs" style="left:357px;top:745px;width:1223px;height:1px;background:#b9cde3"></div>
<!-- log -->
<div class="abs" style="left:347px;top:751px;width:1243px;height:130px;overflow:hidden">
<div class="logl" style="left:14px;top:-7px">11:23:05 [LCC电气模型] <u style="letter-spacing:0.7px">Ground</u>元件不可用,未连接到母线</div>
<div class="logl" style="left:14px;top:21px">11:23:14 [LCC电气模型] <u>Bus4</u>元件不可用,未连接到母线</div>
<div class="logl" style="left:14px;top:49px">11:23:16 [LCC电气模型] <u style="letter-spacing:0.7px">Ground</u>元件不可用，回路无电源设备</div>
<div class="logl" style="left:14px;top:77px">11:23:16 [LCC电气模型] <u>Bus4</u>元件不可用，回路无电源设备</div>
<div class="logl" style="left:14px;top:105px">11:23:30 [LCC电气模型] <u style="letter-spacing:0.3px">Breaker</u>元件挂起</div>
</div>
<div class="abs" style="left:1582px;top:860px;width:8px;height:21px;background:#d5d5d5;border-radius:4px"></div>

<div id="footer"><div class="abs" style="left:0;top:0;width:1590px;text-align:center;font-size:12px;line-height:21px;color:#6d6d6d;white-space:pre"><span style="letter-spacing:0.85px">Copyright © </span>上海科梁信息科技股份有限公司</div></div>

</body>
</html>
